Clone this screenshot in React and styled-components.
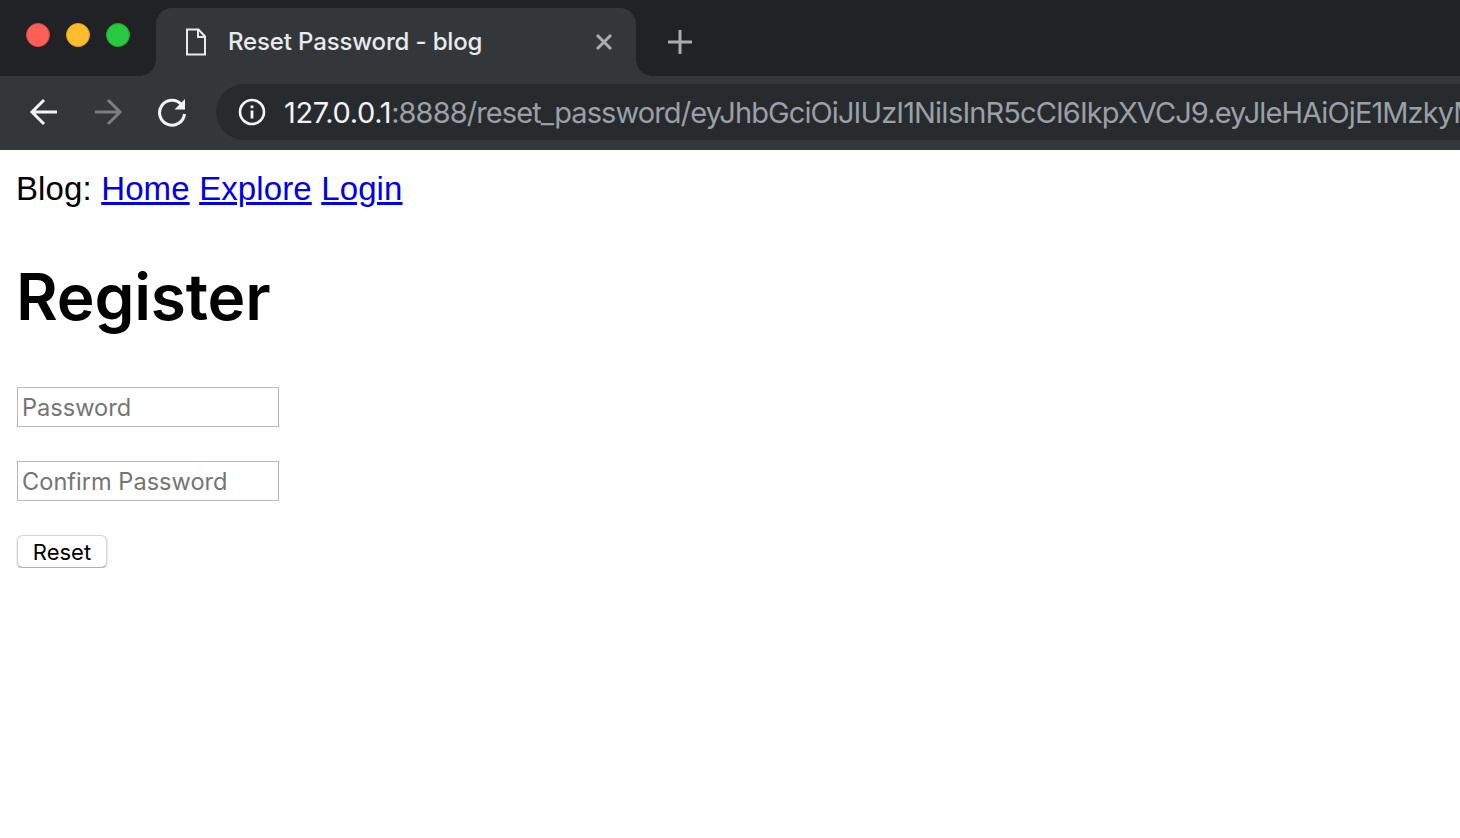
import React from 'react';
import styled, { createGlobalStyle } from 'styled-components';

const frameColour = '#202226';
const toolbarColour = '#33373a';
const urlBarColour = '#282b2e';
const linkColour = '#0000ee';

const GlobalStyle = createGlobalStyle`
	html,
	body {
		margin: 0;
		background: #ffffff;
		font-family: 'Liberation Sans', Arial, sans-serif;
	}
	svg {
		flex: none;
	}
`;

const TabStrip = styled.div`
	display: flex;
	height: 76px;
	padding-top: 8px;
	box-sizing: border-box;
	background: ${frameColour};
`;

const TrafficLights = styled.div`
	display: flex;
	gap: 16px;
	width: 156px;
	padding: 15px 0 0 26px;
	box-sizing: border-box;
`;

const Light = styled.span`
	width: 24px;
	height: 24px;
	border-radius: 50%;
	box-sizing: border-box;
	background: ${(p) => p.$colour};
	border: 1px solid ${(p) => p.$edge};
`;

const Tab = styled.div`
	position: relative;
	display: flex;
	align-items: center;
	width: 480px;
	padding: 0 23px 0 29px;
	box-sizing: border-box;
	border-radius: 16px 16px 0 0;
	background: ${toolbarColour};

	&::before,
	&::after {
		content: '';
		position: absolute;
		bottom: 0;
		width: 16px;
		height: 16px;
	}
	&::before {
		left: -16px;
		background: radial-gradient(circle at 0 0, ${frameColour} 15.5px, ${toolbarColour} 16px);
	}
	&::after {
		right: -16px;
		background: radial-gradient(circle at 100% 0, ${frameColour} 15.5px, ${toolbarColour} 16px);
	}
`;

const TabTitle = styled.span`
	flex: 1;
	margin: 0 0 2px 21px;
	color: #e8eaed;
	font: 500 24px 'Inter', sans-serif;
	letter-spacing: -0.15px;
	white-space: nowrap;
`;

const NewTab = styled.div`
	display: flex;
	align-items: center;
	margin-left: 31px;
`;

const Toolbar = styled.div`
	display: flex;
	align-items: center;
	height: 74px;
	padding: 0 0 2px 28px;
	box-sizing: border-box;
	background: ${toolbarColour};
	overflow: hidden;
`;

const NavIcons = styled.div`
	display: flex;
	align-items: center;
	gap: 32px;
	width: 188px;
	flex: none;
`;

const UrlBar = styled.div`
	display: flex;
	align-items: center;
	flex: 1;
	min-width: 0;
	height: 56px;
	padding-left: 22px;
	border-radius: 28px 0 0 28px;
	background: ${urlBarColour};
	overflow: hidden;
`;

const Url = styled.span`
	flex: 1;
	min-width: 0;
	margin-left: 18px;
	overflow: hidden;
	color: #9aa0a6;
	font: 400 29px 'Inter', sans-serif;
	letter-spacing: -0.9px;
	white-space: nowrap;
`;

const Host = styled.span`
	color: #f1f3f4;
	letter-spacing: -0.35px;
`;

const Page = styled.main`
	padding: 0 16px;
	color: #000000;
`;

const Nav = styled.nav`
	display: flex;
	gap: 9.5px;
	padding-top: 20px;
	font-size: 33px;
	line-height: 37px;
	letter-spacing: 0.1px;
`;

const NavLink = styled.a`
	color: ${linkColour};
	text-decoration: underline;
`;

const Heading = styled.h1`
	margin: 53px 0 0 0;
	font: 600 64px/74px 'Inter', sans-serif;
	letter-spacing: -0.2px;
`;

const Form = styled.form`
	display: flex;
	flex-direction: column;
	align-items: flex-start;
	gap: 34px;
	margin: 53px 0 0 1px;
`;

const Input = styled.input`
	width: 262px;
	height: 40px;
	padding: 0 4px;
	box-sizing: border-box;
	border: 1px solid #b9b9b9;
	border-radius: 0;
	background: #ffffff;
	font: 400 23.6px 'Inter', sans-serif;
	outline: none;

	&::placeholder {
		color: #757575;
		opacity: 1;
	}
`;

const Button = styled.button`
	width: 90px;
	height: 33px;
	padding: 0;
	border: 1px solid #d4d4d4;
	border-bottom-color: #b0b0b0;
	border-radius: 6px;
	background: #ffffff;
	box-shadow: 0 1px 2px rgba(0, 0, 0, 0.25);
	color: #000000;
	font: 400 22px 'Inter', sans-serif;
`;

const PageIcon = () => (
	<svg width="22" height="28" viewBox="0 0 22 28" fill="none" stroke="#e8eaed" strokeWidth="2">
		<path d="M2 1.5h11.5l6.5 7v18H2z" />
		<path d="M13 1.5v7.5h7" />
	</svg>
);

const CloseIcon = () => (
	<svg width="18" height="18" viewBox="0 0 18 18" stroke="#a9adb1" strokeWidth="3">
		<path d="M2 2l14 14M16 2L2 16" />
	</svg>
);

const PlusIcon = () => (
	<svg width="26" height="26" viewBox="0 0 26 26" stroke="#a9adb1" strokeWidth="3">
		<path d="M13 1v24M1 13h24" />
	</svg>
);

const ArrowIcon = ({ flip, colour }) => (
	<svg width="32" height="32" viewBox="0 0 32 32" fill="none" stroke={colour} strokeWidth="3"
		style={flip ? { transform: 'scaleX(-1)' } : undefined}>
		<path d="M29 16H5M16 4L4 16l12 12" />
	</svg>
);

const ReloadIcon = () => (
	<svg width="32" height="32" viewBox="0 0 32 32" fill="none">
		<path d="M25.5 8.5A12.5 12.5 0 1 0 28.5 18" stroke="#f1f3f4" strokeWidth="3" />
		<path d="M29 3v10.5H18.5z" fill="#f1f3f4" />
	</svg>
);

const InfoIcon = () => (
	<svg width="28" height="28" viewBox="0 0 28 28" fill="none">
		<circle cx="14" cy="14" r="12" stroke="#f1f3f4" strokeWidth="2.6" />
		<path d="M12.6 12.5h2.8v8h-2.8zM12.6 7.5h2.8v2.8h-2.8z" fill="#f1f3f4" />
	</svg>
);

const App = () => (
	<>
		<GlobalStyle />
		<TabStrip>
			<TrafficLights>
				<Light $colour="#ff5f57" $edge="#e0443e" />
				<Light $colour="#ffbd2e" $edge="#dea123" />
				<Light $colour="#28c940" $edge="#1aab29" />
			</TrafficLights>
			<Tab>
				<PageIcon />
				<TabTitle>Reset Password - blog</TabTitle>
				<CloseIcon />
			</Tab>
			<NewTab>
				<PlusIcon />
			</NewTab>
		</TabStrip>
		<Toolbar>
			<NavIcons>
				<ArrowIcon colour="#f1f3f4" />
				<ArrowIcon colour="#7b7f83" flip />
				<ReloadIcon />
			</NavIcons>
			<UrlBar>
				<InfoIcon />
				<Url>
					<Host>127.0.0.1</Host>:8888/reset_password/eyJhbGciOiJIUzI1NiIsInR5cCI6IkpXVCJ9.eyJleHAiOjE1MzkyM
				</Url>
			</UrlBar>
		</Toolbar>
		<Page>
			<Nav>
				<span>Blog:</span>
				<NavLink href="#home">Home</NavLink>
				<NavLink href="#explore">Explore</NavLink>
				<NavLink href="#login">Login</NavLink>
			</Nav>
			<Heading>Register</Heading>
			<Form onSubmit={(e) => e.preventDefault()}>
				<Input type="password" placeholder="Password" />
				<Input type="password" placeholder="Confirm Password" />
				<Button type="submit">Reset</Button>
			</Form>
		</Page>
	</>
);

export default App;
